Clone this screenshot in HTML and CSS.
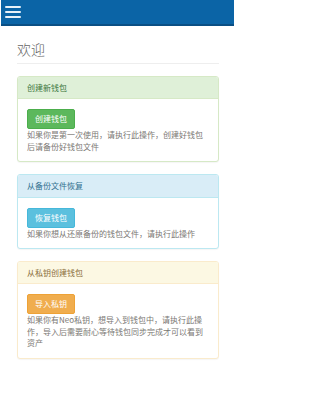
FILE: index.html
```html
<!DOCTYPE html>
<html lang="zh">
<head>
<meta charset="utf-8">
<meta name="viewport" content="width=device-width, initial-scale=1">
<title>欢迎</title>
<link rel="stylesheet" href="styles.css">
</head>
<body>
<div class="page">
<header class="topbar">
  <span class="menu-btn"><i></i><i></i><i></i></span>
</header>
<main class="content">
  <h1 class="page-title">欢迎</h1>
  <section class="panel panel-success">
    <div class="panel-heading">创建新钱包</div>
    <div class="panel-body">
      <span class="btn btn-success">创建钱包</span>
      <p>如果你是第一次使用，请执行此操作，创建好钱包后请备份好钱包文件</p>
    </div>
  </section>
  <section class="panel panel-info">
    <div class="panel-heading">从备份文件恢复</div>
    <div class="panel-body">
      <span class="btn btn-info">恢复钱包</span>
      <p>如果你想从还原备份的钱包文件，请执行此操作</p>
    </div>
  </section>
  <section class="panel panel-warning">
    <div class="panel-heading">从私钥创建钱包</div>
    <div class="panel-body">
      <span class="btn btn-warning">导入私钥</span>
      <p>如果你有Neo私钥，想导入到钱包中，请执行此操作，导入后需要耐心等待钱包同步完成才可以看到资产</p>
    </div>
  </section>
</main>
</div>
</body>
</html>
```

FILE: styles.css
```css
html, body {
  margin: 0;
  padding: 0;
  background: #ffffff;
}
body {
  font-family: "Noto Sans CJK SC", "Noto Sans", sans-serif;
  font-size: 8px;
  line-height: 11.4px;
  color: #7a7773;
}
.page {
  width: 234px;
  box-sizing: border-box;
  padding-left: 1px;
  overflow: hidden;
}
.topbar {
  height: 24px;
  background: #0b64a6;
  border-bottom: 2px solid #0a4f84;
  display: flex;
  align-items: center;
  padding-left: 4px;
}
.menu-btn {
  display: flex;
  flex-direction: column;
  gap: 3px;
  width: 16px;
}
.menu-btn i {
  display: block;
  height: 2px;
  background: #e8f1f8;
  border-radius: 1px;
}
.content {
  padding: 0 15px 0 16px;
}
.page-title {
  margin: 14px 0 12px;
  padding-bottom: 5px;
  border-bottom: 1px solid #eeeeee;
  font-size: 14px;
  line-height: 18px;
  font-weight: 300;
  color: #666;
}
.panel {
  border: 1px solid #ddd;
  border-radius: 3px;
  margin-bottom: 12px;
  background: #fff;
  box-shadow: 0 1px 1px rgba(0,0,0,0.04);
}
.panel-heading {
  padding: 5px 9px;
  line-height: 11.4px;
  border-bottom: 1px solid transparent;
  border-radius: 2px 2px 0 0;
}
.panel-body {
  padding: 10px 9px 9px;
}
.panel-body p {
  margin: 0;
}
.btn {
  display: inline-block;
  padding: 3px 7px;
  line-height: 12px;
  border-radius: 2px;
  color: #fff;
  border: 1px solid transparent;
}
.panel-success { border-color: #d6e9c6; }
.panel-success .panel-heading { background: #dff0d8; color: #3c763d; border-color: #d6e9c6; }
.panel-info { border-color: #bce8f1; }
.panel-info .panel-heading { background: #d9edf7; color: #31708f; border-color: #bce8f1; }
.panel-warning { border-color: #faebcc; }
.panel-warning .panel-heading { background: #fcf8e3; color: #8a6d3b; border-color: #faebcc; }
.btn-success { background: #5cb85c; border-color: #4cae4c; }
.btn-info { background: #5bc0de; border-color: #46b8da; }
.btn-warning { background: #f0ad4e; border-color: #eea236; }
```
